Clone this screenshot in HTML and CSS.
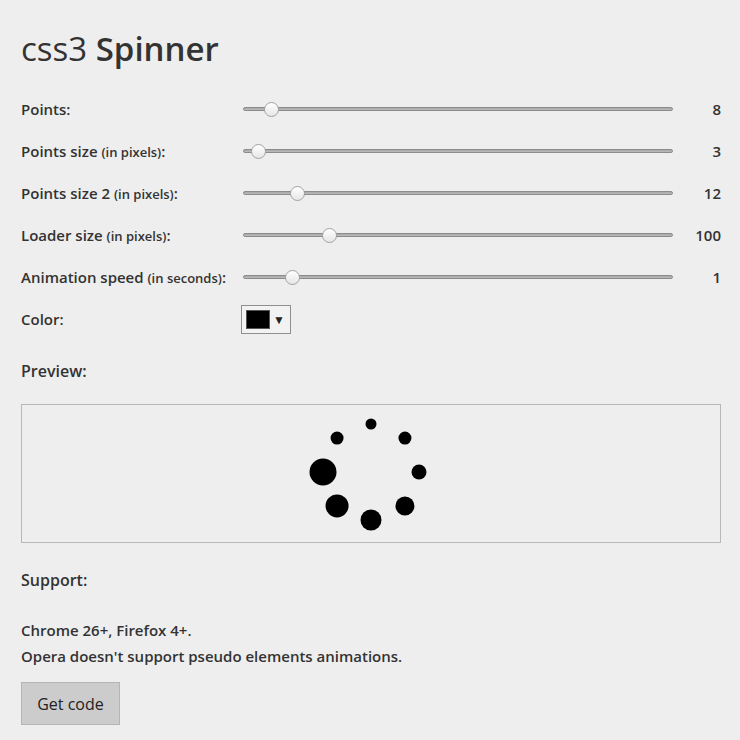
FILE: index.html
```html
<!DOCTYPE html>
<html lang="en">

<head>
    <meta charset="UTF-8">
    <title>css3 Spinner</title>
    <link rel="stylesheet" href="styles.css">
</head>

<body>

    <div class="page">
        <h1 class="title"><span class="title-light">css3</span> Spinner</h1>

        <div class="controls">
            <div class="row">
                <label class="label">Points:</label>
                <input type="range" class="slider" min="6" max="48" value="8">
                <span class="value">8</span>
            </div>
            <div class="row">
                <label class="label">Points size <small>(in pixels)</small>:</label>
                <input type="range" class="slider" min="2" max="60" value="3">
                <span class="value">3</span>
            </div>
            <div class="row">
                <label class="label">Points size 2 <small>(in pixels)</small>:</label>
                <input type="range" class="slider" min="2" max="92" value="12">
                <span class="value">12</span>
            </div>
            <div class="row">
                <label class="label">Loader size <small>(in pixels)</small>:</label>
                <input type="range" class="slider" min="30" max="400" value="100">
                <span class="value">100</span>
            </div>
            <div class="row">
                <label class="label">Animation speed <small>(in seconds)</small>:</label>
                <input type="range" class="slider" min="0" max="10" step="0.1" value="1">
                <span class="value">1</span>
            </div>
            <div class="row">
                <label class="label">Color:</label>
                <div class="color-picker">
                    <span class="swatch"></span>
                    <span class="arrow">&#9660;</span>
                </div>
            </div>
        </div>

        <h2 class="heading heading-preview">Preview:</h2>
        <div class="preview">
            <div class="spinner">
                <span class="dot dot-1"></span>
                <span class="dot dot-2"></span>
                <span class="dot dot-3"></span>
                <span class="dot dot-4"></span>
                <span class="dot dot-5"></span>
                <span class="dot dot-6"></span>
                <span class="dot dot-7"></span>
                <span class="dot dot-8"></span>
            </div>
        </div>

        <h2 class="heading heading-support">Support:</h2>
        <p class="support">Chrome 26+, Firefox 4+.<br>Opera doesn't support pseudo elements animations.</p>

        <button class="btn">Get code</button>
    </div>

</body>

</html>
```

FILE: styles.css
```css
body {
    margin: 0;
    background-color: #eeeeee;
    color: #333333;
    font-family: "Open Sans", Lato, sans-serif;
}

.page {
    width: 700px;
    padding: 0 19px 0 21px;
}

.title {
    margin: 29px 0 19px;
    font-size: 33px;
    font-weight: 600;
    line-height: 40px;
}

.title-light {
    font-weight: 400;
}

.controls {
    display: flex;
    flex-direction: column;
}

.row {
    display: grid;
    grid-template-columns: 222px 430px 1fr;
    align-items: center;
    height: 42px;
}

.label {
    font-size: 15px;
    font-weight: 600;
}

.label small {
    font-size: 13px;
}

.value {
    text-align: right;
    font-size: 15px;
    font-weight: 600;
}

.slider {
    -webkit-appearance: none;
    appearance: none;
    width: 430px;
    height: 16px;
    margin: 0;
    background: transparent;
}

.slider::-webkit-slider-runnable-track {
    height: 4px;
    border: 1px solid #8c8c8c;
    border-radius: 3px;
    background: linear-gradient(to bottom, #a6a6a6, #bdbdbd);
}

.slider::-webkit-slider-thumb {
    -webkit-appearance: none;
    width: 15px;
    height: 15px;
    margin-top: -6px;
    border: 1px solid #a3a3a3;
    border-radius: 50%;
    background: linear-gradient(to bottom, #ffffff, #e6e6e6);
}

.color-picker {
    display: flex;
    align-items: center;
    gap: 3px;
    width: 40px;
    height: 21px;
    margin-left: -2px;
    padding: 3px 4px;
    border: 1px solid #8f8f8f;
    background-color: #f2f2f2;
}

.swatch {
    width: 24px;
    height: 19px;
    border: 1px solid #555555;
    background-color: #000000;
    box-sizing: border-box;
}

.arrow {
    font-size: 12px;
    color: #222222;
}

.heading {
    font-size: 16px;
    font-weight: 600;
    line-height: 20px;
}

.heading-preview {
    margin: 21px 0 23px;
}

.heading-support {
    margin: 27px 0 27px;
}

.preview {
    display: flex;
    align-items: center;
    justify-content: center;
    height: 137px;
    border: 1px solid #b8b8b8;
}

.spinner {
    position: relative;
    width: 100px;
    height: 100px;
    margin-top: -3px;
}

.dot {
    position: absolute;
    left: 50%;
    top: 50%;
    border-radius: 50%;
    background-color: #000000;
}

.dot-1 { width: 11px; height: 11px; transform: translate(-50%, -50%) rotate(0deg) translateY(-48px); }
.dot-2 { width: 13px; height: 13px; transform: translate(-50%, -50%) rotate(45deg) translateY(-48px); }
.dot-3 { width: 15px; height: 15px; transform: translate(-50%, -50%) rotate(90deg) translateY(-48px); }
.dot-4 { width: 19px; height: 19px; transform: translate(-50%, -50%) rotate(135deg) translateY(-48px); }
.dot-5 { width: 21px; height: 21px; transform: translate(-50%, -50%) rotate(180deg) translateY(-48px); }
.dot-6 { width: 23px; height: 23px; transform: translate(-50%, -50%) rotate(225deg) translateY(-48px); }
.dot-7 { width: 27px; height: 27px; transform: translate(-50%, -50%) rotate(270deg) translateY(-48px); }
.dot-8 { width: 13px; height: 13px; transform: translate(-50%, -50%) rotate(315deg) translateY(-48px); }

.support {
    margin: 0 0 13px;
    font-size: 15px;
    font-weight: 600;
    line-height: 26px;
}

.btn {
    width: 99px;
    height: 43px;
    border: 1px solid #b5b5b5;
    background-color: #cccccc;
    color: #222222;
    font-family: "Open Sans", Lato, sans-serif;
    font-size: 16px;
    cursor: pointer;
}
```
